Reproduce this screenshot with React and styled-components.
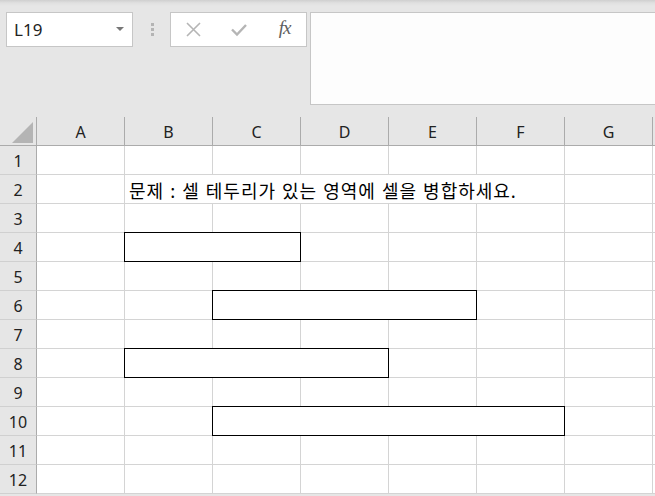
import React from 'react';
import styled, { createGlobalStyle } from 'styled-components';

const GlobalStyle = createGlobalStyle`
  html, body {
    margin: 0;
    padding: 0;
    background: #e6e6e6;
    font-family: "Noto Sans", "Noto Sans CJK KR", sans-serif;
  }
`;

const Page = styled.div`
  width: 655px;
  height: 496px;
  overflow: hidden;
  background: #e6e6e6;
`;

const TopArea = styled.div`
  height: 117px;
  box-sizing: border-box;
  padding: 12px 0 0 6px;
  display: flex;
  align-items: flex-start;
  background: linear-gradient(#cfcfcf 0, #e0e0e0 3px, #e6e6e6 6px);
`;

const NameBox = styled.div`
  width: 127px;
  height: 35px;
  box-sizing: border-box;
  border: 1px solid #c6c6c6;
  background: #fff;
  display: flex;
  align-items: center;
  justify-content: space-between;
  padding: 0 8px 0 7px;
  font-size: 17px;
  color: #222;
`;

const DropArrow = styled.span`
  width: 0;
  height: 0;
  border-left: 4px solid transparent;
  border-right: 4px solid transparent;
  border-top: 4px solid #777;
  margin-top: -2px;
`;

const Grip = styled.div`
  width: 37px;
  height: 35px;
  display: flex;
  flex-direction: column;
  align-items: center;
  justify-content: center;
  gap: 2px;
  padding-left: 1px;
  box-sizing: border-box;

  span {
    width: 3px;
    height: 3px;
    background: #b4b4b4;
  }
`;

const FormulaButtons = styled.div`
  width: 137px;
  height: 35px;
  box-sizing: border-box;
  border: 1px solid #c6c6c6;
  background: #fff;
  display: grid;
  grid-template-columns: repeat(3, 45px);
  align-items: center;
  justify-items: center;
`;

const Fx = styled.span`
  font-family: "Liberation Serif", serif;
  font-style: italic;
  font-size: 19px;
  color: #5e5e5e;
  letter-spacing: -1px;
  margin: -3px 0 0 2px;
`;

const FormulaInput = styled.div`
  flex: 1;
  margin-left: 3px;
  margin-right: -2px;
  height: 93px;
  box-sizing: border-box;
  border: 1px solid #c6c6c6;
  background: #fdfdfd;
`;

const Sheet = styled.div`
  background: #fff;
`;

const Row = styled.div`
  display: grid;
  grid-template-columns: 37px repeat(8, 88px);
  height: 29px;
`;

const Corner = styled.div`
  background: #e6e6e6;
  border-right: 1px solid #ababab;
  border-bottom: 1px solid #ababab;
  display: flex;
  align-items: flex-end;
  justify-content: flex-end;
  padding: 0 3px 2px 0;
`;

const Triangle = styled.span`
  width: 0;
  height: 0;
  border-left: 21px solid transparent;
  border-bottom: 21px solid #b4b4b4;
`;

const ColHead = styled.div`
  background: #e6e6e6;
  border-right: 1px solid #ababab;
  border-bottom: 1px solid #ababab;
  display: flex;
  align-items: center;
  justify-content: center;
  font-size: 16px;
  color: #222;
  padding-top: 1px;
`;

const RowHead = styled.div`
  background: #e6e6e6;
  border-right: 1px solid #ababab;
  border-bottom: 1px solid #d0d0d0;
  display: flex;
  align-items: center;
  justify-content: center;
  font-size: 16px;
  color: #222;
  padding-top: 1px;
`;

const Cell = styled.div`
  background: #fff;
  border-right: 1px solid #d4d4d4;
  border-bottom: 1px solid #d4d4d4;
`;

const TextCell = styled(Cell)`
  grid-column: span ${p => p.$span};
  display: flex;
  align-items: center;
  padding: 1px 0 0 4px;
  white-space: nowrap;
  font-family: "Noto Sans CJK KR", "Noto Sans", sans-serif;
  font-size: 18px;
  letter-spacing: 1px;
  word-spacing: 1px;
  color: #000;
`;

const Framed = styled.div`
  grid-column: span ${p => p.$span};
  margin: -1px 0 0 -1px;
  background: #fff;
  border: 1px solid #000;
`;

// H is only a sliver at the right edge, its letter lies off screen
const letters = ['A', 'B', 'C', 'D', 'E', 'F', 'G', 'H'];

const rows = [
  { n: 1 },
  { n: 2, text: { from: 1, span: 5, value: '문제 : 셀 테두리가 있는 영역에 셀을 병합하세요.' } },
  { n: 3 },
  { n: 4, box: { from: 1, span: 2 } },
  { n: 5 },
  { n: 6, box: { from: 2, span: 3 } },
  { n: 7 },
  { n: 8, box: { from: 1, span: 3 } },
  { n: 9 },
  { n: 10, box: { from: 2, span: 4 } },
  { n: 11 },
  { n: 12 },
];

const CancelIcon = () => (
  <svg width="17" height="17" viewBox="0 0 17 17">
    <path d="M2 2L15 15M15 2L2 15" stroke="#b5b5b5" strokeWidth="1.6" fill="none" />
  </svg>
);

const CheckIcon = () => (
  <svg width="18" height="14" viewBox="0 0 18 14">
    <path d="M2 6.5L7 11.5L16 2" stroke="#b5b5b5" strokeWidth="2.4" fill="none" />
  </svg>
);

function SheetRow({ row }) {
  const cells = [];
  let i = 0;
  while (i < letters.length) {
    if (row.box && row.box.from === i) {
      cells.push(<Framed key={i} $span={row.box.span} />);
      i += row.box.span;
    } else if (row.text && row.text.from === i) {
      cells.push(
        <TextCell key={i} $span={row.text.span}>
          {row.text.value}
        </TextCell>
      );
      i += row.text.span;
    } else {
      cells.push(<Cell key={i} />);
      i += 1;
    }
  }
  return (
    <Row>
      <RowHead>{row.n}</RowHead>
      {cells}
    </Row>
  );
}

export default function App() {
  return (
    <Page>
      <GlobalStyle />
      <TopArea>
        <NameBox>
          L19
          <DropArrow />
        </NameBox>
        <Grip>
          <span />
          <span />
          <span />
        </Grip>
        <FormulaButtons>
          <CancelIcon />
          <CheckIcon />
          <Fx>fx</Fx>
        </FormulaButtons>
        <FormulaInput />
      </TopArea>
      <Sheet>
        <Row>
          <Corner>
            <Triangle />
          </Corner>
          {letters.map(l => (
            <ColHead key={l}>{l === 'H' ? '' : l}</ColHead>
          ))}
        </Row>
        {rows.map(r => (
          <SheetRow key={r.n} row={r} />
        ))}
      </Sheet>
    </Page>
  );
}
